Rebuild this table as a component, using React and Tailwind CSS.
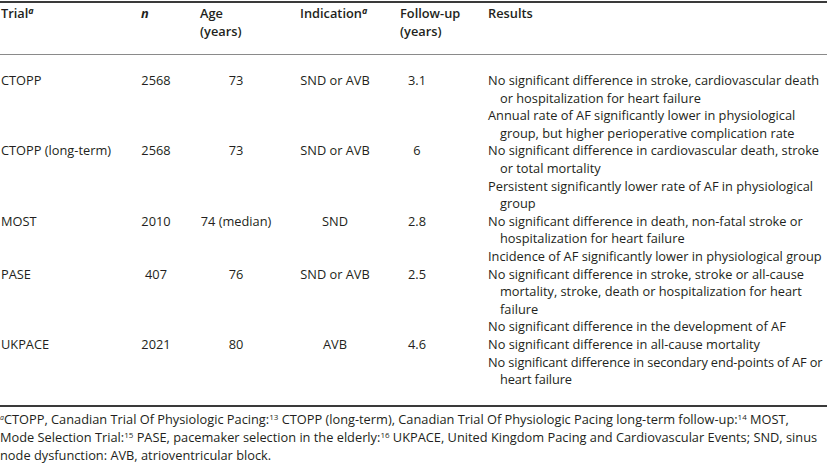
import React from "react";

const rows = [
  {
    trial: "CTOPP",
    n: "2568",
    age: "73",
    indication: "SND or AVB",
    followUp: "3.1",
    results: [
      "No significant difference in stroke, cardiovascular death or hospitalization for heart failure",
      "Annual rate of AF significantly lower in physiological group, but higher perioperative complication rate",
    ],
  },
  {
    trial: "CTOPP (long-term)",
    n: "2568",
    age: "73",
    indication: "SND or AVB",
    followUp: "6",
    results: [
      "No significant difference in cardiovascular death, stroke or total mortality",
      "Persistent significantly lower rate of AF in physiological group",
    ],
  },
  {
    trial: "MOST",
    n: "2010",
    age: "74 (median)",
    indication: "SND",
    followUp: "2.8",
    results: [
      "No significant difference in death, non-fatal stroke or hospitalization for heart failure",
      "Incidence of AF significantly lower in physiological group",
    ],
  },
  {
    trial: "PASE",
    n: "407",
    age: "76",
    indication: "SND or AVB",
    followUp: "2.5",
    results: [
      "No significant difference in stroke, stroke or all-cause mortality, stroke, death or hospitalization for heart failure",
      "No significant difference in the development of AF",
    ],
  },
  {
    trial: "UKPACE",
    n: "2021",
    age: "80",
    indication: "AVB",
    followUp: "4.6",
    results: [
      "No significant difference in all-cause mortality",
      "No significant difference in secondary end-points of AF or heart failure",
    ],
  },
];

function Sup({ children }) {
  return <sup className="text-[9px] leading-none italic font-bold">{children}</sup>;
}

function Ref({ children }) {
  return <sup className="text-[8px] leading-none">{children}</sup>;
}

function App() {
  return (
    <div
      className="w-[827px] h-[466px] overflow-hidden bg-white text-[#231f20] text-[12.8px] leading-[17.6px]"
      style={{ fontFamily: '"Open Sans", sans-serif' }}
    >
      <div className="border-t-2 border-[#3a3a3a] mt-[1px]" />
      <div className="flex font-semibold pt-[2px] h-[52px] border-b border-[#8a8a8a]">
        <div className="w-[140px] pl-[1px]">
          Trial<Sup>a</Sup>
        </div>
        <div className="w-[60px] pl-[1px] italic font-bold">n</div>
        <div className="w-[100px]">
          Age
          <br />
          (years)
        </div>
        <div className="w-[100px]">
          Indication<Sup>a</Sup>
        </div>
        <div className="w-[88px]">
          Follow-up
          <br />
          (years)
        </div>
        <div className="flex-1">Results</div>
      </div>

      <div className="pt-[17px] pb-[16px]">
        {rows.map((row) => (
          <div key={row.trial} className="flex">
            <div className="w-[140px] pl-[1px]">{row.trial}</div>
            <div className="w-[60px]">
              <div className="w-[32px] text-center">{row.n}</div>
            </div>
            <div className="w-[100px]">
              <div className="w-[72px] text-center">{row.age}</div>
            </div>
            <div className="w-[100px]">
              <div className="w-[70px] text-center">{row.indication}</div>
            </div>
            <div className="w-[88px]">
              <div className="w-[34px] text-center">{row.followUp}</div>
            </div>
            <div className="flex-1">
              {row.results.map((r) => (
                <p
                  key={r}
                  className={
                    r.includes("secondary")
                      ? "pl-[12px] -indent-[12px] tracking-[-0.12px]"
                      : "pl-[12px] -indent-[12px]"
                  }
                >
                  {r}
                </p>
              ))}
            </div>
          </div>
        ))}
      </div>

      <div className="border-t-2 border-[#3a3a3a]" />
      <p className="pt-[3px] text-[12.8px] leading-[18px] pr-1">
        <sup className="text-[7px] leading-none italic">a</sup>CTOPP, Canadian Trial Of Physiologic
        Pacing:<Ref>13</Ref> CTOPP (long-term), Canadian Trial Of Physiologic Pacing long-term
        follow-up:<Ref>14</Ref> MOST, Mode Selection Trial:<Ref>15</Ref> PASE, pacemaker selection
        in the elderly:<Ref>16</Ref> UKPACE, United Kingdom Pacing and Cardiovascular Events; SND,
        sinus node dysfunction: AVB, atrioventricular block.
      </p>
    </div>
  );
}

export default App;
